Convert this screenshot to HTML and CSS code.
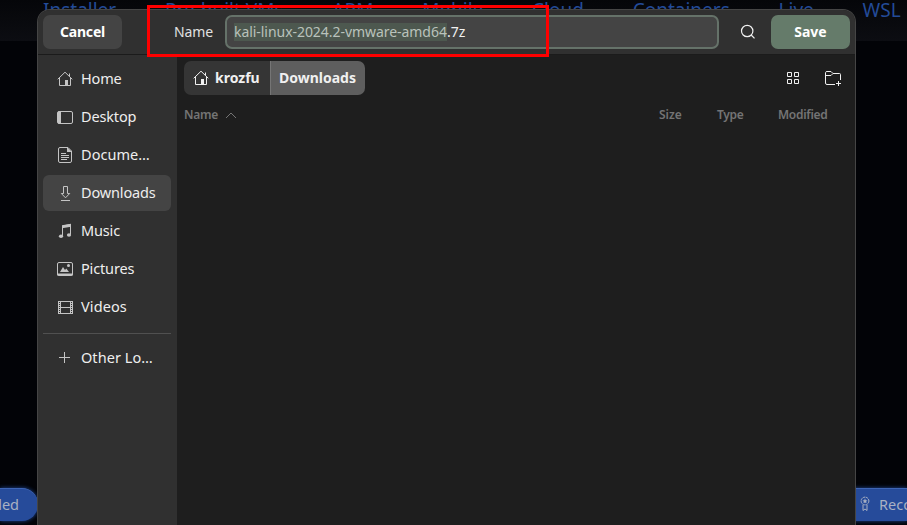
FILE: index.html
```html
<!DOCTYPE html>
<html lang="en">
<head>
<meta charset="utf-8">
<title>Save file</title>
<link rel="stylesheet" href="styles.css">
</head>
<body>
<svg class="defs" width="0" height="0">
  <symbol id="home" viewBox="0 0 16 16"><path d="M.7 8.3 8 1.2l7.3 7.1M2.5 7v7.5h11V7M12.500 2.500V5" fill="none" stroke="currentColor"/><path d="M8 9h3v6H8z" fill="currentColor"/></symbol>
</svg>
<div class="page">
  <nav class="tabs"><a>Installer</a><a>Pre-built VMs</a><a>ARM</a><a>Mobile</a><a>Cloud</a><a>Containers</a><a>Live</a><a>WSL</a></nav>
  <div class="badges">
    <span class="badge badge-left">ded</span>
    <span class="badge badge-right"><svg width="10" height="16" viewBox="0 0 10 16" fill="none" stroke="currentColor"><circle cx="5" cy="5" r="3.900" stroke-dasharray="2.500 .6"/><path d="m5 2.500.8 1.700 1.700.3-1.300 1.100.3 1.700L5 6.500l-1.500.8.3-1.700-1.300-1.100 1.700-.3z" fill="currentColor" stroke="none"/><path d="M3 9v5.500l2-1.500 2 1.500V9"/></svg><span>Recommended</span></span>
  </div>
</div>
<main class="dialog">
  <header class="header">
    <button class="btn cancel">Cancel</button>
    <label class="name">Name</label>
    <div class="field"><span class="selected">kali-linux-2024.2-vmware-amd64</span><span class="ext">.7z</span></div>
    <svg class="search" width="16" height="16" viewBox="0 0 16 16" fill="none" stroke="currentColor" stroke-width="1.200"><circle cx="7.200" cy="7" r="5.700"/><path d="m11.200 11 3.300 3.300"/></svg>
    <button class="btn save">Save</button>
  </header>
  <div class="body">
    <aside class="sidebar">
      <div class="row"><svg width="16" height="16"><use href="#home"/></svg><span class="t-home">Home</span></div>
      <div class="row"><svg width="16" height="16" viewBox="0 0 16 16"><rect x=".5" y="2.500" width="15" height="12" rx="1.500" fill="none" stroke="currentColor"/><path d="M1 2.500h3v12H1z" fill="currentColor"/></svg><span class="t-desktop">Desktop</span></div>
      <div class="row"><svg width="16" height="16" viewBox="0 0 16 16"><path d="M3 .5h8l3.500 3.500v10a1.500 1.500 0 0 1-1.500 1.500H3A1.500 1.500 0 0 1 1.500 14V2A1.500 1.500 0 0 1 3 .5ZM4 6.500h5M4 8.500h8M4 10.500h8M4 12.500h6" fill="none" stroke="currentColor"/><path d="M10 0v5h5z" fill="currentColor"/></svg><span class="t-docs">Docume…</span></div>
      <div class="row active"><svg width="16" height="16" viewBox="0 0 16 16" fill="none" stroke="currentColor"><path d="M6.500 1.500h4v7h2.200l-4.200 4.300-4.200-4.300h2.200zM4 15.500h9"/></svg><span class="t-down">Downloads</span></div>
      <div class="row"><svg width="16" height="16" viewBox="0 0 16 16"><path d="M5.500 13V3l8-1.500v10" fill="none" stroke="currentColor"/><path d="M5 2.200 14 .7v3L5 5.200z" fill="currentColor"/><ellipse cx="4" cy="13.300" rx="2.100" ry="1.800" fill="currentColor"/><ellipse cx="12" cy="12" rx="2.100" ry="1.800" fill="currentColor"/></svg><span class="t-music">Music</span></div>
      <div class="row"><svg width="16" height="16" viewBox="0 0 16 16"><path d="M2 1.500h12A1.500 1.500 0 0 1 15.500 3v11H.5V3A1.500 1.500 0 0 1 2 1.500Z" fill="none" stroke="currentColor"/><path d="M0 12.500h16v.5a2 2 0 0 1-2 2H2a2 2 0 0 1-2-2zM3 11l3-5 2 3 1.300-1.500L12 11z" fill="currentColor"/><circle cx="11.500" cy="4.500" r="1.500" fill="currentColor"/></svg><span class="t-pics">Pictures</span></div>
      <div class="row"><svg width="16" height="16" viewBox="0 0 16 16" fill="none" stroke="currentColor"><path d="M1 2.500h15M1 14.500h15M3.500 2v13M13.500 2v13M3.500 8.500h10M1.500 2v13M15.500 2v13"/><path d="M2.500 2v13M14.500 2v13" stroke-dasharray="1 1"/></svg><span class="t-videos">Videos</span></div>
      <hr class="rule">
      <div class="row"><svg width="16" height="16" viewBox="0 0 16 16" fill="none" stroke="currentColor"><path d="M2 7.500h11M7.500 2v11"/></svg><span class="t-other">Other Lo…</span></div>
    </aside>
    <section class="content">
      <div class="toolbar">
        <div class="crumbs"><span class="crumb"><svg width="16" height="16"><use href="#home"/></svg><b class="t-user">krozfu</b></span><span class="crumb current"><b class="t-cur">Downloads</b></span></div>
        <svg class="grid" width="16" height="16" viewBox="0 0 16 16" fill="none" stroke="currentColor"><path d="M2.500 2.500h4v4h-4zM9.500 2.500h4v4h-4zM2.500 9.500h4v4h-4zM9.500 9.500h4v4h-4z"/></svg>
        <svg class="newdir" width="18" height="16" viewBox="0 0 18 16" fill="none" stroke="currentColor"><path d="M11 14.500H3A1.500 1.500 0 0 1 1.500 13V2.500A1.500 1.500 0 0 1 3 1.500h4l2 2h6.500a1 1 0 0 1 1 1V10M1.500 5.500h5.500l2-2M14.500 11v5M12 13.500h5"/></svg>
      </div>
      <div class="columns"><span class="c-name">Name</span><svg width="12" height="8" viewBox="0 0 12 8" fill="none" stroke="currentColor"><path d="m1 7 5-5 5 5"/></svg><span class="c-size">Size</span><span class="c-type">Type</span><span class="c-mod">Modified</span></div>
    </section>
  </div>
</main>
<div class="highlight"></div>
</body>
</html>
```
FILE: styles.css
```css
* { box-sizing: border-box; }
body { margin: 0; background: #020307; font: 14.5px/20px "Noto Sans", "Open Sans", sans-serif; color: #f0f0f0; overflow: hidden; }
svg { flex: none; display: block; }
.defs { position: absolute; }
span, b, a, label { white-space: nowrap; }
.page { height: 525px; display: flex; flex-direction: column; justify-content: space-between; overflow: hidden; }
.tabs { height: 41px; padding-left: 43px; display: flex; gap: 48.8px; background: linear-gradient(#050609, #0c0d12); color: #234b98; font-size: 19px; line-height: 20px; }
.badges { height: 37px; display: flex; justify-content: space-between; color: #a9b1c3; }
.badge { height: 33px; background: #264b9a; border-top: 1px solid #3f65b5; box-shadow: 0 0 4px #214894; display: flex; align-items: center; padding-bottom: 2px; }
.badge-left { width: 38px; border-radius: 0 16px 16px 0; text-indent: -7px; }
.badge-right { width: 60px; padding-left: 13px; gap: 9px; overflow: hidden; }
.dialog { position: absolute; left: 37px; top: 9px; width: 819px; height: 516px; border: 1px solid #454545; border-bottom: 0; border-radius: 13px 13px 0 0; background: #1e1e1e; overflow: hidden; display: flex; flex-direction: column; }
.header { height: 45px; flex: none; padding: 5px 5px 0; background: #303030; display: flex; align-items: flex-start; border-bottom: 1px solid #1b1b1b; }
.btn { height: 34px; width: 79px; border: 0; padding: 0; border-radius: 7px; font: bold 14px/34px "Noto Sans", sans-serif; color: #fff; }
.cancel { background: #444; letter-spacing: -.2px; }
.save { background: #657b6a; }
.name { margin-left: 52px; width: 51px; line-height: 34px; font-size: 14px; color: #e0e0e0; letter-spacing: -.1px; }
.field { width: 494px; height: 34px; border: 2px solid #657269; border-radius: 7px; background: #444; padding: 6px 7px; display: flex; line-height: 18px; font-size: 14px; }
.selected { background: #4d584f; color: #b9c2bb; width: 213px; letter-spacing: -.05px; }
.search { margin: 9px 15px 0 21px; }
.body { flex: 1; display: flex; min-height: 0; }
.sidebar { width: 139px; background: #303030; padding: 6px 6px 0 5px; display: flex; flex-direction: column; gap: 2px; }
.row { height: 36px; flex: none; display: flex; align-items: center; gap: 8px; padding-left: 14px; border-radius: 6px; color: #eee; font-size: 14.5px; letter-spacing: -.15px; }
.row span { padding-bottom: 2px; }
.row svg { color: #c4c4c4; }
.t-videos { letter-spacing: .1px; }
.t-docs, .t-other { letter-spacing: .05px; }
.active { background: #444; }
.rule { width: 100%; height: 1px; border: 0; margin: 6px 0 4px; background: #505050; flex: none; }
.content { flex: 1; padding: 6px 0 0 7px; }
.toolbar { height: 34px; display: flex; align-items: center; }
.crumbs { display: flex; width: 181px; height: 34px; border-radius: 7px; overflow: hidden; }
.crumb { width: 86px; background: #353535; display: flex; align-items: center; gap: 6px; padding-left: 9px; font-size: 14px; }
.current { width: 95px; background: #5e5e5e; border-left: 1px solid #757575; padding-left: 8px; }
.grid { margin-left: 420px; }
.newdir { margin-left: 23px; }
.columns { margin-top: 10px; height: 20px; display: flex; align-items: center; font-size: 12px; font-weight: 600; letter-spacing: -.3px; color: #747474; }
.c-name { width: 41px; }
.c-size { margin-left: 422px; width: 58px; letter-spacing: 0; }
.c-type { width: 61px; }
.highlight { position: absolute; left: 147px; top: 5px; width: 402px; height: 52px; border: 3px solid #f00; }
```
